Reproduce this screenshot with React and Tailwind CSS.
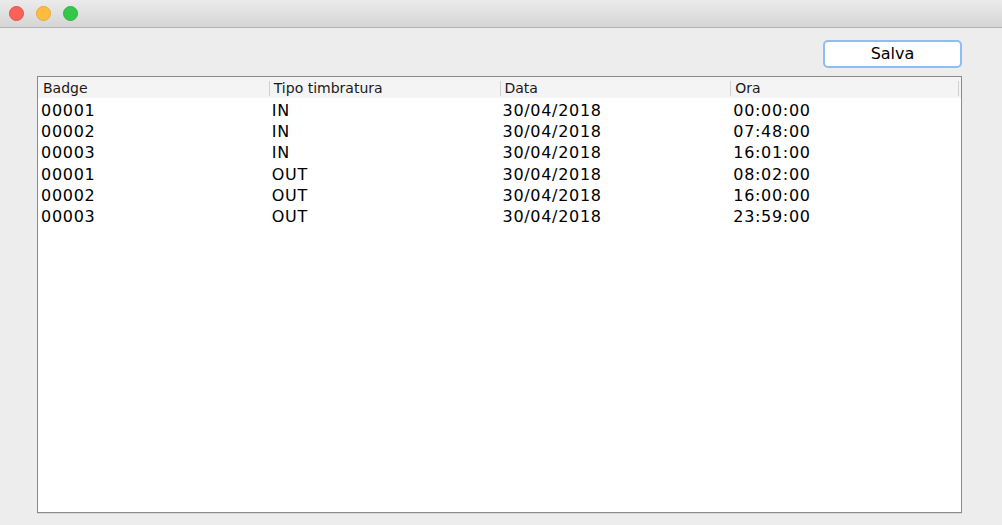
const rows = [
  ["00001", "IN", "30/04/2018", "00:00:00"],
  ["00002", "IN", "30/04/2018", "07:48:00"],
  ["00003", "IN", "30/04/2018", "16:01:00"],
  ["00001", "OUT", "30/04/2018", "08:02:00"],
  ["00002", "OUT", "30/04/2018", "16:00:00"],
  ["00003", "OUT", "30/04/2018", "23:59:00"],
];

const headers = ["Badge", "Tipo timbratura", "Data", "Ora"];

export default function App() {
  return (
    <div
      className="w-[1002px] h-[525px] bg-[#ededed] flex flex-col overflow-hidden"
      style={{ fontFamily: '"DejaVu Sans", "Liberation Sans", sans-serif' }}
    >
      {/* title bar */}
      <div className="h-[28px] shrink-0 bg-gradient-to-b from-[#ebebeb] to-[#d5d5d5] border-b border-[#b3b3b3] flex items-center pl-[9px] gap-[12px]">
        <div className="w-[15px] h-[15px] rounded-full bg-[#fc605b] border border-[#e5504a]" />
        <div className="w-[15px] h-[15px] rounded-full bg-[#fdbc40] border border-[#e6a83a]" />
        <div className="w-[15px] h-[15px] rounded-full bg-[#34c84a] border border-[#2bb53c]" />
      </div>

      <div className="flex justify-end pt-[12px] pr-[40px]">
        <button className="w-[139px] h-[28px] bg-white border-2 border-[#8fbcf5] rounded-[5px] text-[16px] text-black leading-none">
          Salva
        </button>
      </div>

      {/* table */}
      <div className="mt-[8px] ml-[37px] w-[925px] h-[437px] bg-white border border-[#8a8a8a] shadow-[0_1px_0_#d8d8d8] flex flex-col">
        <div className="h-[21px] bg-[#f4f4f4] grid grid-cols-4 text-[14px] text-[#1a1a1a] pt-px">
          {headers.map((h, i) => (
            <div key={h} className="flex items-center">
              {i > 0 && <div className="w-px h-[15px] bg-[#d0d0d0] mr-[4px]" />}
              <span className={i === 0 ? "pl-[5px]" : ""}>{h}</span>
              {i === 3 && <div className="ml-auto mr-[2px] w-px h-[15px] bg-[#d0d0d0]" />}
            </div>
          ))}
        </div>
        {rows.map((r, idx) => (
          <div key={idx} className="h-[21.2px] grid grid-cols-4 text-[16px] text-black tracking-[0.7px] pt-px">
            {r.map((c, i) => (
              <div key={i} className="flex items-center pl-[3px]">
                {c}
              </div>
            ))}
          </div>
        ))}
      </div>
    </div>
  );
}
